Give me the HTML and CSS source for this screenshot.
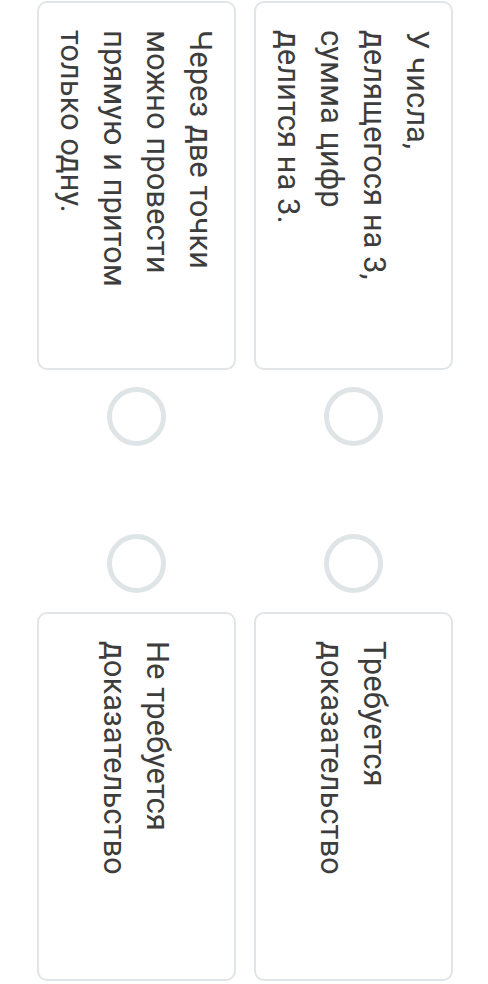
FILE: index.html
```html
<!DOCTYPE html>
<html lang="ru">
<head>
  <meta charset="UTF-8">
  <meta name="viewport" content="width=device-width, initial-scale=1.0">
  <title>Соотнесите</title>
  <link rel="stylesheet" href="styles.css">
</head>
<body>
  <div class="frame">
    <div class="stage">
      <ul class="pairs">
        <li class="pair">
          <div class="card"><p>У числа, делящегося на 3, сумма цифр делится на 3.</p></div>
          <span class="dot"></span>
          <span class="dot dot-right"></span>
          <div class="card"><p>Требуется доказательство</p></div>
        </li>
        <li class="pair">
          <div class="card"><p>Через две точки можно провести прямую и притом только одну.</p></div>
          <span class="dot"></span>
          <span class="dot dot-right"></span>
          <div class="card"><p>Не требуется доказательство</p></div>
        </li>
      </ul>
    </div>
  </div>
</body>
</html>
```

FILE: styles.css
```css
* {
  margin: 0;
  padding: 0;
  box-sizing: border-box;
}
body {
  background: #fff;
}
.frame {
  width: 488px;
  height: 984px;
  overflow: hidden;
}
/* the page is photographed turned a quarter to the right */
.stage {
  width: 984px;
  height: 488px;
  transform: rotate(90deg);
  transform-origin: 244px 244px;
  font-family: Roboto, "Noto Sans", sans-serif;
  color: #3d3d3d;
}
.pairs {
  list-style-type: none;
  display: flex;
  flex-direction: column;
  gap: 18px;
  padding: 35px 0 0 1px;
}
.pair {
  display: flex;
  align-items: center;
  height: 199px;
}
.card {
  width: 369px;
  height: 199px;
  border: 2px solid #e1e5e7;
  border-radius: 10px;
  display: flex;
  align-items: center;
  padding: 0 50px 0 27px;
}
.card p {
  font-size: 31px;
  line-height: 43px;
}
.dot {
  width: 59px;
  height: 59px;
  border: 5px solid #dfe4e6;
  border-radius: 50%;
  margin-left: 17px;
}
.dot-right {
  margin-left: 88px;
  margin-right: 19px;
}
```
